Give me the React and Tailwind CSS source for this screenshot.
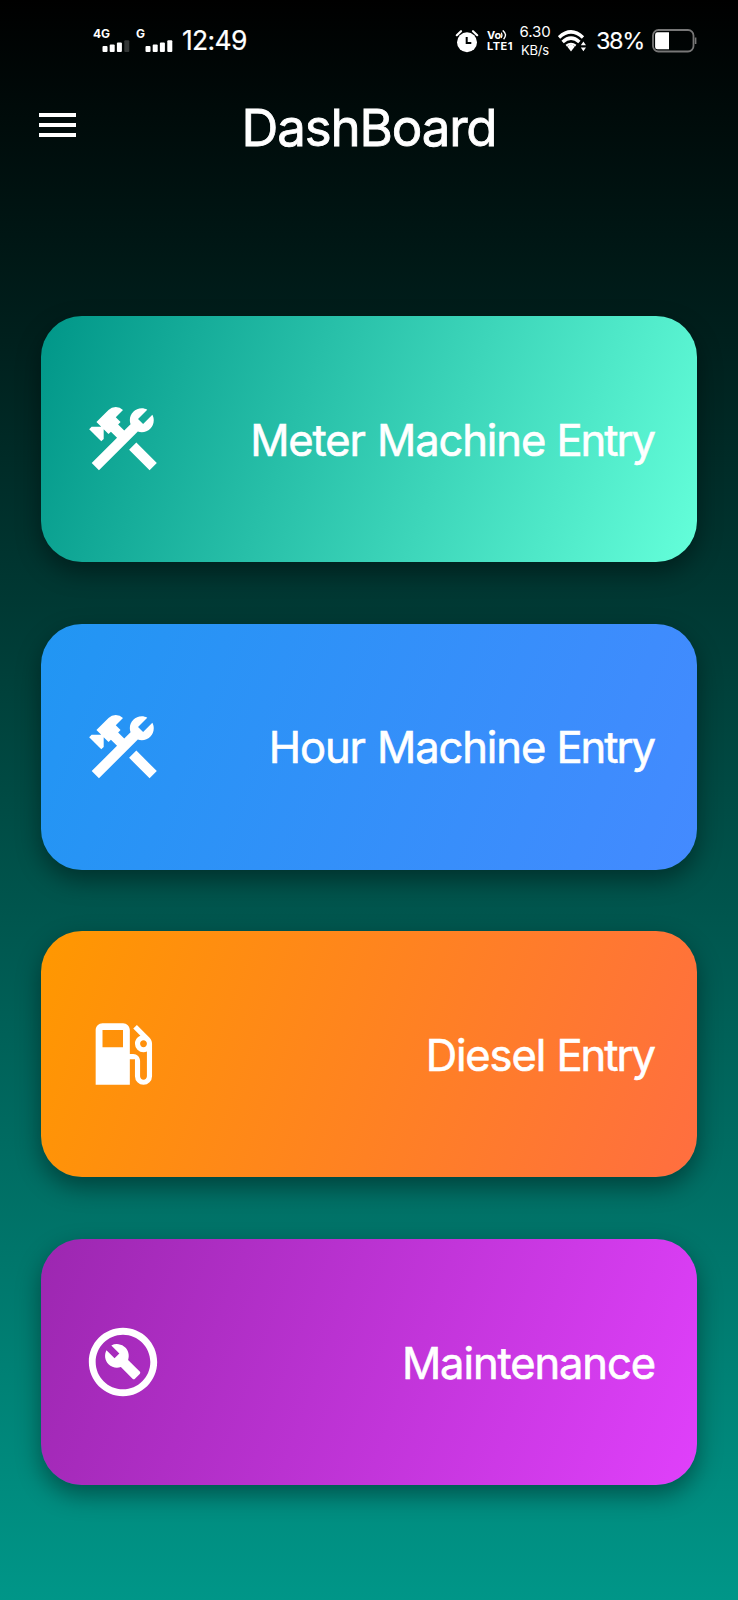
import React from 'react';
import { MdConstruction, MdLocalGasStation, MdOutlineBuildCircle } from 'react-icons/md';

const cards = [
  { name: 'Meter Machine', entry: true, Icon: MdConstruction, tone: 'from-[#009688] to-[#64ffda]' },
  { name: 'Hour Machine', entry: true, Icon: MdConstruction, tone: 'from-[#2196f3] to-[#448aff]' },
  { name: 'Diesel', entry: true, Icon: MdLocalGasStation, tone: 'from-[#ff9800] to-[#ff6e40]' },
  { name: 'Maintenance', entry: false, Icon: MdOutlineBuildCircle, tone: 'from-[#9c27b0] to-[#e040fb]' },
];

function Signal({ label, faded }) {
  return (
    <div className="flex h-6 w-[38px] flex-col">
      <span className="h-[11px] text-[12px] leading-[10px] font-bold">{label}</span>
      <svg className="ml-[9px] h-[12px] w-[28px]" viewBox="0 0 28 12" fill="white">
        <rect x="0.5" y="6" width="5" height="6" rx="1" />
        <rect x="7.7" y="4.6" width="5" height="7.4" rx="1" />
        <rect x="14.9" y="2.6" width="5" height="9.4" rx="1" />
        <rect x="22.3" y="0.3" width="5" height="11.7" rx="1" opacity={faded ? 0.2 : 1} />
      </svg>
    </div>
  );
}

function StatusBar() {
  return (
    <div className="flex h-[81px] items-center pr-[41px] pl-[93px]">
      <Signal label="4G" faded />
      <div className="ml-[5px]">
        <Signal label="G" />
      </div>
      <span className="ml-[8px] w-[70px] text-[26.5px] leading-none tracking-[-0.7px] whitespace-nowrap [-webkit-text-stroke:0.2px_white]">12:49</span>
      <svg className="ml-auto h-[24px] w-[24px] shrink-0" viewBox="0 0 24 24">
        <circle cx="12" cy="13.2" r="10" fill="white" />
        <path d="M1.8 6.2 6 2.2M22.2 6.2 18 2.2" stroke="white" strokeWidth="2.2" strokeLinecap="round" />
        <path d="M11.7 8v6h4.6" stroke="#000303" strokeWidth="2" fill="none" />
      </svg>
      <div className="ml-[8px] flex w-[28px] flex-col">
        <div className="flex h-[11px] items-start">
          <span className="text-[11px] leading-[10px] font-bold">Vo</span>
          <svg className="h-[10px] w-[7px]" viewBox="0 0 7 10" fill="none" stroke="white" strokeWidth="1.4">
            <path d="M0 2.7Q1.8 5 0 8M1.7.4Q6.8 4.5 2.6 9.3" />
          </svg>
        </div>
        <span className="h-[11px] text-[11px] leading-[11px] font-bold tracking-[0.5px]">LTE1</span>
      </div>
      <div className="ml-[3px] flex w-[34px] flex-col items-center text-[15px] leading-[18px]">
        <span className="tracking-[-0.1px]">6.30</span>
        <span className="text-[13px] tracking-[-0.2px]">KB/s</span>
      </div>
      <svg className="ml-[6px] h-[24px] w-[30px] shrink-0" viewBox="0 0 30 24" fill="none" stroke="white" strokeWidth="3.4">
        <path d="M1 8.4Q13 -2.6 25 8.4" />
        <path d="M4.6 13Q13 5.2 21.4 13" />
        <path d="M9.2 17.4Q13 13.6 16.8 17.4L13 22.4Z" fill="white" stroke="none" />
        <path d="M8.2 16.6Q13 12.8 17.8 16.6" strokeWidth="2" />
        <path d="M22.8 16.2 25.4 12.6l2.6 3.6zM22.8 18.6l2.6 3.6 2.6-3.6z" fill="white" stroke="none" />
      </svg>
      <span className="ml-[8px] w-[49px] text-[23.5px] leading-none tracking-[-1.4px] whitespace-nowrap [-webkit-text-stroke:0.1px_white]">38%</span>
      <svg className="ml-[7px] h-[24px] w-[45px] shrink-0" viewBox="0 0 45 24">
        <rect x="1" y="1" width="40.5" height="21.5" rx="5.5" fill="none" stroke="#777" strokeWidth="1.8" />
        <path d="M43.6 8.5v6.5" stroke="#777" strokeWidth="1.6" />
        <path d="M5.5 3.3H17v17H5.5a2.4 2.4 0 0 1-2.4-2.4V5.7a2.4 2.4 0 0 1 2.4-2.4z" fill="white" />
      </svg>
    </div>
  );
}

export default function App() {
  return (
    <div className="flex h-[1600px] w-[738px] flex-col overflow-hidden bg-[linear-gradient(180deg,#000000,#009688)] font-['Inter','Liberation_Sans',sans-serif] text-white">
      <StatusBar />
      <header className="grid h-[92px] grid-cols-[1fr_auto_1fr] items-center px-[39px]">
        <button aria-label="Menu" className="mb-[4px] flex w-[37px] flex-col gap-[6px]">
          <span className="h-1 bg-white" />
          <span className="h-1 bg-white" />
          <span className="h-1 bg-white" />
        </button>
        <h1 className="text-[51px] leading-none tracking-[-1.15px] whitespace-nowrap [-webkit-text-stroke:0.8px_white]">DashBoard</h1>
      </header>
      <main className="mt-[143px] flex flex-col gap-[61.6px] px-[41px]">
        {cards.map(({ name, entry, Icon, tone }) => (
          <button
            key={name}
            className={`flex h-[246px] shrink-0 items-center justify-between rounded-[41px] bg-linear-[110.56deg] px-[41px] shadow-[0_10px_24px_rgba(0,0,0,0.4)] ${tone}`}
          >
            <Icon className="size-[82px]" />
            <span className="mr-px pt-[3px] text-[43.5px] leading-none tracking-[-1.1px] whitespace-nowrap [word-spacing:1px] [-webkit-text-stroke:0.6px_white]">
              {name}
              {entry && <span className="mr-px tracking-[-2px]"> Entry</span>}
            </span>
          </button>
        ))}
      </main>
    </div>
  );
}
